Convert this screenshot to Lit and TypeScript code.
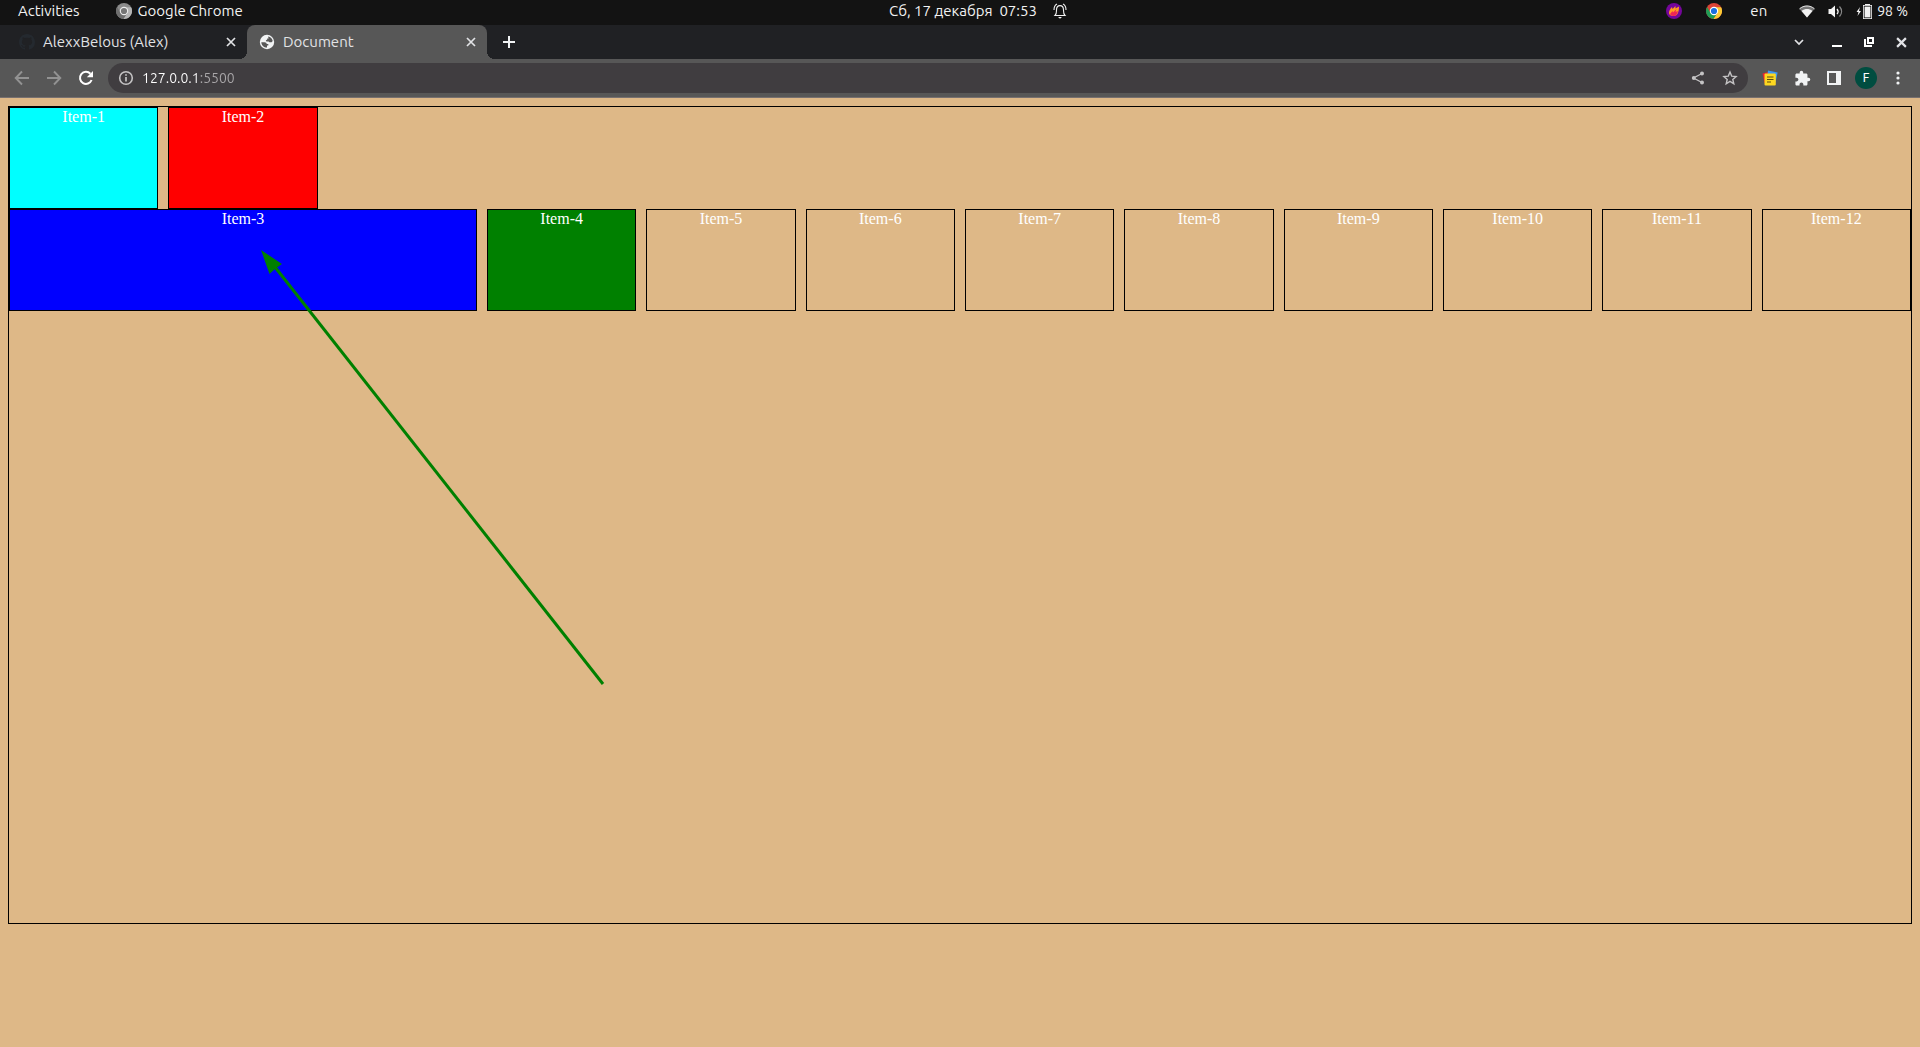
import { LitElement, html, css, svg } from "lit";
import { customElement } from "lit/decorators.js";
import { classMap } from "lit/directives/class-map.js";

const uiFont = css`"Ubuntu", "Noto Sans", "Open Sans", sans-serif`;

const chromeLogo = (c: string[]) => html`
  <svg width="16" height="16" viewBox="0 0 16 16" aria-hidden="true">
    <circle cx="8" cy="8" r="8" fill=${c[0]} />
    <path d="M1.1 4 A8 8 0 0 0 7.6 16 L11.4 10 L8 8 L4.6 10 Z" fill=${c[1]} />
    <path d="M8 4.3 H15.1 A8 8 0 0 1 7.6 16 L11.4 10 Z" fill=${c[2]} />
    <circle cx="8" cy="8" r="4.2" fill=${c[3]} />
    <circle cx="8" cy="8" r="3.1" fill=${c[4]} />
  </svg>`;

@customElement("system-bar")
export class SystemBar extends LitElement {
  static styles = css`
    :host {
      display: grid;
      grid-template-columns: 1fr auto 1fr;
      align-items: center;
      height: 25px;
      flex: none;
      background: #131313;
      color: #f2f2f2;
      font: 15px/22px ${uiFont};
      padding: 0 12px 3px 18px;
      box-sizing: border-box;
      white-space: pre;
    }
    .group { display: flex; align-items: center; }
    .app { margin-left: 36px; gap: 6px; }
    .right { justify-content: space-between; }
    .bell { margin-left: 16px; }
    .tray { gap: 24px; font-size: 14px; }
    .status { gap: 13px; margin-left: 8px; }
    .lang { margin-left: 4px; font-size: 15px; }
    .battery { gap: 4px; }
    svg { display: block; flex: none; }
    button { all: unset; display: flex; align-items: center; }
  `;

  render() {
    return html`
      <div class="group">
        <button>Activities</button>
        <button class="app">
          ${chromeLogo(["#8b8b8b", "#6e6e6e", "#b4b4b4", "#ececec", "#757575"])}
          <span>Google Chrome</span>
        </button>
      </div>
      <button>Сб, 17 декабря  07:53</button>
      <div class="group right">
        <svg class="bell" width="14" height="16" viewBox="0 0 14 16" fill="none" stroke="#f2f2f2" stroke-width="1.1">
          <path d="M2 12.5 C3.6 11 3.5 9.5 3.5 7 C3.5 4.5 4.8 2.6 7 2.6 C9.2 2.6 10.5 4.5 10.5 7 C10.5 9.5 10.4 11 12 12.5 Z" />
          <path d="M1 7 C1 4 2 2 4 1 M13 7 C13 4 12 2 10 1" />
          <path d="M5 14 H9 L7 15.8 Z" fill="#f2f2f2" stroke="none" />
        </svg>
        <div class="group tray">
          <svg width="16" height="16" viewBox="0 0 16 16">
            <circle cx="8" cy="8" r="8" fill="#75069b" />
            <path d="M3 10 C3 8 4 6 6 4 L6.5 6 L9.5 3 L9.5 5.5 L13 3.5 C13 8 12 13 7.5 13 C5 13 3 12 3 10 Z" fill="#ff9d1e" />
            <path d="M4 11 L6.5 8 L7 9.5 L10.5 6 L9.5 9 L12 8 C11.4 11 10 13 7.5 13 C5.7 13 4.4 12.3 4 11 Z" fill="#ef2456" />
          </svg>
          ${chromeLogo(["#dd4436", "#1f9d55", "#fcc934", "#ffffff", "#1a6fe0"])}
          <button class="lang">en</button>
          <button class="status">
            <svg width="16" height="13" viewBox="0 0 16 13">
              <path d="M0.5 4 C5 0 11 0 15.5 4 L8 12.5 Z" fill="#777" />
              <path d="M0.5 3.8 C5 0 11 0 15.5 3.8" fill="none" stroke="#f2f2f2" />
              <path d="M2.6 6 C6 3.4 10 3.4 13.4 6 L8 12.5 Z" fill="#f2f2f2" />
            </svg>
            <svg width="15" height="13" viewBox="0 0 15 13">
              <path d="M0.5 4 H3 L7 0.5 V12.5 L3 9 H0.5 Z" fill="#f2f2f2" />
              <path d="M9 4 C10.3 5.5 10.3 7.5 9 9" fill="none" stroke="#f2f2f2" stroke-width="1.3" />
              <path d="M11.5 1.5 C14.2 4.5 14.2 8.5 11.5 11.5" fill="none" stroke="#888" stroke-width="1.3" />
            </svg>
            <span class="group battery">
              <svg width="17" height="15" viewBox="0 0 17 15">
                <path d="M4 3 L0.5 8 H2.5 L1.5 12 L5 7 H3 Z" fill="#f2f2f2" />
                <path d="M9 0 H14 V1 H16 V15 H7 V1 H9 Z" fill="#f2f2f2" />
                <rect x="8.2" y="2.2" width="6.6" height="11.6" fill="none" stroke="#131313" stroke-width="0.8" />
              </svg>
              <span>98 %</span>
            </span>
          </button>
        </div>
      </div>
    `;
  }
}

@customElement("tab-strip")
export class TabStrip extends LitElement {
  static styles = css`
    :host {
      display: flex;
      align-items: center;
      height: 34px;
      flex: none;
      padding: 0 3px 0 7px;
      background: #202124;
      color: #e2e3e6;
      font: 15px/20px ${uiFont};
    }
    .tab {
      display: flex;
      align-items: center;
      gap: 8px;
      box-sizing: border-box;
      width: 240px;
      height: 34px;
      padding: 0 8px 0 12px;
      position: relative;
    }
    .title {
      flex: 1;
      color: inherit;
      text-decoration: none;
      white-space: nowrap;
    }
    .active { background: #575757; border-radius: 8px 8px 0 0; }
    .active::before, .active::after {
      content: "";
      position: absolute;
      bottom: 0;
      width: 8px;
      height: 8px;
    }
    .active::before {
      right: 100%;
      background: radial-gradient(circle at 0 0, transparent 8px, #575757 8px);
    }
    .active::after {
      left: 100%;
      background: radial-gradient(circle at 100% 0, transparent 8px, #575757 8px);
    }
    button {
      all: unset;
      display: flex;
      align-items: center;
      justify-content: center;
    }
    .close { width: 16px; height: 16px; }
    .round { width: 28px; height: 28px; margin: 0 8px; }
    .spacer { flex: 1; }
    .win { width: 32px; height: 32px; }
    svg { display: block; flex: none; }
  `;

  private cross(size: number, weight: number) {
    return html`<svg width=${size} height=${size} viewBox="0 0 10 10" stroke="currentColor" stroke-width=${weight}>
      <path d="M1 1 L9 9 M9 1 L1 9" />
    </svg>`;
  }

  private tab(title: string, icon: unknown, active: boolean) {
    return html`<div class=${classMap({ tab: true, active })}>
      <svg width="16" height="16" viewBox="0 0 16 16" aria-hidden="true">${icon}</svg>
      <a class="title" href="#">${title}</a>
      <button class="close" aria-label="Close tab">${this.cross(10, 1.7)}</button>
    </div>`;
  }

  render() {
    const github = svg`<path fill="#24292f" d="M8 0C3.58 0 0 3.58 0 8c0 3.54 2.29 6.53 5.47 7.59.4.07.55-.17.55-.38 0-.19-.01-.82-.01-1.49-2.01.37-2.53-.49-2.69-.94-.09-.23-.48-.94-.82-1.13-.28-.15-.68-.52-.01-.53.63-.01 1.08.58 1.23.82.72 1.21 1.87.87 2.33.66.07-.52.28-.87.51-1.07-1.78-.2-3.64-.89-3.64-3.95 0-.87.31-1.59.82-2.15-.08-.2-.36-1.02.08-2.12 0 0 .67-.21 2.2.82.64-.18 1.32-.27 2-.27s1.36.09 2 .27c1.53-1.04 2.2-.82 2.2-.82.44 1.1.16 1.92.08 2.12.51.56.82 1.27.82 2.15 0 3.07-1.87 3.75-3.65 3.95.29.25.54.73.54 1.48 0 1.07-.01 1.93-.01 2.2 0 .21.15.46.55.38A8.01 8.01 0 0 0 16 8c0-4.42-3.58-8-8-8z"/>`;
    const globe = svg`<circle cx="8" cy="8" r="7.2" fill="#f1f3f4"/>
      <path fill="#575757" d="M9 2.4 C11.6 2.6 13.4 4.6 13.7 7 L12.6 8.3 H10.4 L9.6 7.4 H7.4 L6.8 6.4 L8.2 5.4 V4.4 H9.600 Z"/>
      <path fill="#575757" d="M2.300 8.200 H5.600 C7 8.300 7.600 9 7.700 10 H9.300 V11.400 H8 V13.600 C4.800 13.600 2.400 11.200 2.300 8.200 Z"/>`;
    return html`
      ${this.tab("AlexxBelous (Alex)", github, false)}
      ${this.tab("Document", globe, true)}
      <button class="round" aria-label="New tab">
        <svg width="12" height="12" viewBox="0 0 12 12" fill="#f1f3f4"><path d="M5 0h2v5h5v2H7v5H5V7H0V5h5z" /></svg>
      </button>
      <span class="spacer"></span>
      <button class="round" aria-label="Search tabs">
        <svg width="10" height="7" viewBox="0 0 10 7" fill="none" stroke="#e2e3e6" stroke-width="1.7"><path d="M1 1 L5 5 L9 1" /></svg>
      </button>
      <button class="win" aria-label="Minimize">
        <svg width="10" height="10" viewBox="0 0 10 10" fill="#fff"><path d="M0 8h10v2H0z" /></svg>
      </button>
      <button class="win" aria-label="Restore">
        <svg width="10" height="10" viewBox="0 0 10 10" fill="none" stroke="#fff" stroke-width="2"><path d="M4 1 H9 V6 H4 Z M1 2 V9 H8" /></svg>
      </button>
      <button class="win" aria-label="Close">${this.cross(11, 2)}</button>
    `;
  }
}

@customElement("tool-bar")
export class ToolBar extends LitElement {
  static styles = css`
    :host {
      display: flex;
      align-items: center;
      height: 39px;
      flex: none;
      box-sizing: border-box;
      padding: 0 6px;
      background: #575757;
      border-bottom: 1px solid #77706f;
    }
    button {
      all: unset;
      display: flex;
      align-items: center;
      justify-content: center;
      width: 32px;
      height: 30px;
    }
    .omnibox {
      display: flex;
      align-items: center;
      flex: 1;
      height: 30px;
      margin: 0 6px;
      padding: 0 2px 0 10px;
      box-sizing: border-box;
      border-radius: 15px;
      background: #403d40;
    }
    .url {
      flex: 1;
      min-width: 0;
      height: 20px;
      margin-left: 8px;
      padding: 0;
      border: 0;
      outline: 0;
      font: 14px/20px ${uiFont};
      color: transparent;
      background: linear-gradient(90deg, #fff 57px, #a9a7a9 57px);
      background-clip: text;
      -webkit-background-clip: text;
    }
    .avatar {
      width: 22px;
      height: 22px;
      border-radius: 50%;
      background: #004d40;
      color: #fff;
      font: 12px/22px Roboto, sans-serif;
      text-align: center;
    }
    svg { display: block; flex: none; }
  `;

  render() {
    return html`
      <button aria-label="Back">
        <svg width="16" height="16" viewBox="0 0 16 16" fill="none" stroke="#929292" stroke-width="1.9"><path d="M15 8 H2 M8 1.5 L1.7 8 L8 14.5" /></svg>
      </button>
      <button aria-label="Forward">
        <svg width="16" height="16" viewBox="0 0 16 16" fill="none" stroke="#929292" stroke-width="1.9"><path d="M1 8 H14 M8 1.5 L14.3 8 L8 14.5" /></svg>
      </button>
      <button aria-label="Reload">
        <svg width="16" height="16" viewBox="0 0 16 16"><path d="M13.6 10 A6 6 0 1 1 12.4 3.8" fill="none" stroke="#fff" stroke-width="2" /><path d="M15 1 V7.2 H8.8 Z" fill="#fff" /></svg>
      </button>
      <div class="omnibox">
        <svg width="16" height="16" viewBox="0 0 16 16" fill="none" stroke="#c4c3c4" stroke-width="1.6"><circle cx="8" cy="8" r="6.3" /><path d="M8 7 V11.6 M8 4.2 V5.8" stroke-width="1.7" /></svg>
        <input class="url" type="text" aria-label="Address" value="127.0.0.1:5500" />
        <button aria-label="Share">
          <svg width="14" height="14" viewBox="0 0 14 14" fill="#c4c3c4"><path d="M11 2.5 L2.5 7 L11 11.5" fill="none" stroke="#c4c3c4" stroke-width="1.3" /><circle cx="11" cy="2.4" r="2" /><circle cx="2.8" cy="7" r="2" /><circle cx="11" cy="11.6" r="2" /></svg>
        </button>
        <button aria-label="Bookmark">
          <svg width="16" height="16" viewBox="0 0 16 16" fill="none" stroke="#c4c3c4" stroke-width="1.4"><path d="M8 2 L9.7 6.1 L14.1 6.5 L10.8 9.4 L11.8 13.8 L8 11.4 L4.2 13.8 L5.2 9.4 L1.9 6.5 L6.3 6.1 Z" /></svg>
        </button>
      </div>
      <button aria-label="Notes">
        <svg width="16" height="16" viewBox="0 0 16 16"><path d="M0.5 3.5 L8 1.5 V13 L2.5 13 Z" fill="#e8232f" /><path d="M6 0.5 L15.6 2.6 L13.6 12 L5 9 Z" fill="#3c97f5" /><rect x="2.5" y="3.5" width="11.3" height="12" rx="1" fill="#fdd820" /><path d="M5 7 H11.5 M5 9.5 H11.5 M5 12 H9" stroke="#5d4d10" stroke-width="1.2" /></svg>
      </button>
      <button aria-label="Extensions">
        <svg width="17" height="17" viewBox="0 0 24 24" fill="#f1f3f4"><path d="M20.5 11H19V7c0-1.1-.9-2-2-2h-4V3.5a2.5 2.5 0 0 0-5 0V5H4c-1.1 0-2 .9-2 2v3.8h1.5c1.5 0 2.7 1.2 2.7 2.7S5 16.2 3.5 16.2H2V20c0 1.1.9 2 2 2h3.8v-1.5c0-1.5 1.2-2.7 2.7-2.7s2.7 1.2 2.7 2.7V22H17c1.1 0 2-.9 2-2v-4h1.5a2.5 2.5 0 0 0 0-5z" /></svg>
      </button>
      <button aria-label="Side panel">
        <svg width="14" height="14" viewBox="0 0 14 14"><path d="M0 0 H14 V14 H0 Z M2 2 V12 H9 V2 Z" fill="#f1f3f4" fill-rule="evenodd" /></svg>
      </button>
      <button aria-label="Profile"><span class="avatar">F</span></button>
      <button aria-label="Menu">
        <svg width="4" height="14" viewBox="0 0 4 14" fill="#f1f3f4"><circle cx="2" cy="2" r="1.6" /><circle cx="2" cy="7" r="1.6" /><circle cx="2" cy="12" r="1.6" /></svg>
      </button>
    `;
  }
}

@customElement("grid-page")
export class GridPage extends LitElement {
  static styles = css`
    :host {
      display: flex;
      flex-direction: column;
      flex: 1;
      min-height: 0;
      position: relative;
      background: burlywood;
      color: #fff;
      font: 16px/18px "Liberation Serif", serif;
    }
    .container {
      flex: 0 0 86%;
      margin: 8px;
      display: grid;
      grid-template-columns: repeat(12, 1fr);
      grid-auto-rows: 102px;
      column-gap: 10px;
      border: 1px solid #000;
    }
    .item { border: 1px solid #000; text-align: center; }
    .item-1 { background: aqua; }
    .item-2 { background: red; }
    .item-3 { background: blue; grid-column: 1 / span 3; }
    .item-4 { background: green; }
    .arrow { position: absolute; left: 261px; top: 152px; pointer-events: none; }
  `;

  render() {
    return html`
      <div class="container">
        ${Array.from({ length: 12 }, (_, i) => html`<div class="item item-${i + 1}">Item-${i + 1}</div>`)}
      </div>
      <svg class="arrow" width="344" height="436" viewBox="0 0 344 436" aria-hidden="true">
        <path d="M12 14.5 L342 434" stroke="green" stroke-width="3" fill="none" />
        <path d="M0 0 L21 14 L14.5 18.5 L8.5 24 Z" fill="green" />
      </svg>
    `;
  }
}

@customElement("app-root")
export class AppRoot extends LitElement {
  static styles = css`
    :host {
      display: flex;
      flex-direction: column;
      height: 100vh;
      overflow: hidden;
    }
  `;

  render() {
    return html`
      <system-bar></system-bar>
      <tab-strip></tab-strip>
      <tool-bar></tool-bar>
      <grid-page></grid-page>
    `;
  }
}
